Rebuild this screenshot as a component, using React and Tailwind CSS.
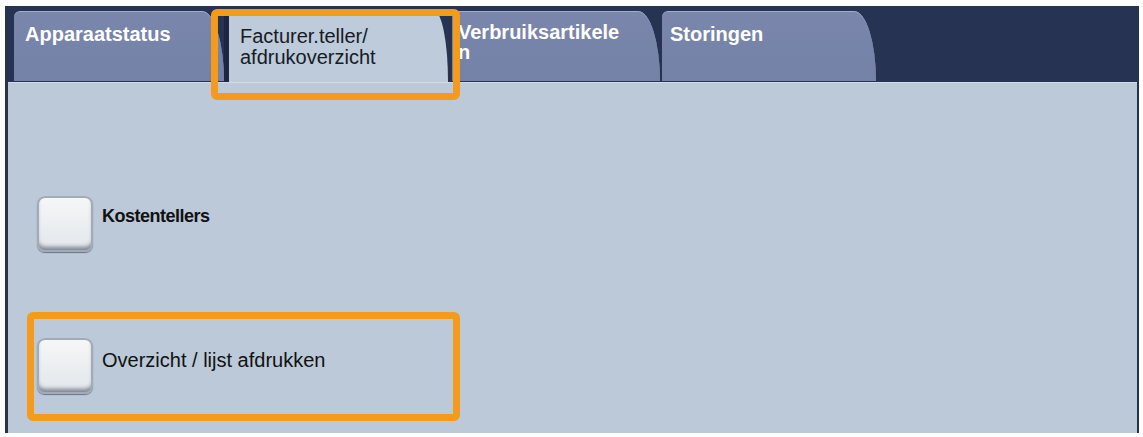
import React from "react";

const font = { fontFamily: '"Liberation Sans", Arial, sans-serif' };

function SquareButton() {
  return (
    <div className="w-[56px] h-[56px] shrink-0 rounded-[8px] bg-gradient-to-b from-[#f6f7f8] to-[#e2e6ea] shadow-[inset_0_0_0_2px_#a3abb7,inset_0_-5px_4px_#7a8494,0_1px_1px_#6b7484]" />
  );
}

export default function App() {
  return (
    <div className="relative w-[1143px] h-[437px] bg-white pt-[6px] pl-[5px] pr-[4px] pb-[4px]" style={font}>
      <div className="flex flex-col h-full border-l-[3px] border-r-[2px] border-[#27324d] bg-[#263353]">
        {/* tab strip */}
        <div className="h-[76px] flex items-start pt-[5px] pl-[6px] shrink-0">
          <div className="w-[210px] h-[70px] rounded-tl-[6px] rounded-tr-[22px_70px] bg-gradient-to-b from-[#7a86ab] to-[#7482a8] border-t border-[#a3adca] pl-[11px] pt-[10px]">
            <span className="text-white font-bold text-[20px] leading-[24px]">Apparaatstatus</span>
          </div>
          <div className="w-[224px] h-[71px] rounded-tl-[4px] rounded-tr-[14px_70px] bg-[#bdcbdb] border-l-[5px] border-[#1d2740] pl-[11px] pt-[15px]">
            <p className="text-[#161b25] text-[20px] leading-[21px]">
              Facturer.teller/
              <br />
              afdrukoverzicht
            </p>
          </div>
          <div className="ml-[4px] w-[208px] h-[70px] rounded-tl-[6px] rounded-tr-[22px_70px] bg-gradient-to-b from-[#7a86ab] to-[#7482a8] border-t border-[#a3adca] pl-[6px] pt-[10px]">
            <p className="text-white font-bold text-[20px] leading-[20px] whitespace-nowrap">
              Verbruiksartikele
              <br />
              n
            </p>
          </div>
          <div className="ml-[2px] w-[214px] h-[70px] rounded-tl-[6px] rounded-tr-[22px_70px] bg-gradient-to-b from-[#7a86ab] to-[#7482a8] border-t border-[#a3adca] pl-[8px] pt-[10px]">
            <span className="text-white font-bold text-[20px] leading-[24px]">Storingen</span>
          </div>
        </div>

        {/* content */}
        <div className="flex-1 bg-[#bbc9d9] border-t border-[#d2dce7] pl-[29px] pt-[113px]">
          <div className="flex items-start gap-[9px]">
            <SquareButton />
            <span className="mt-[8px] text-[#111] font-bold text-[18px] leading-[24px] tracking-[-0.5px]">Kostentellers</span>
          </div>
          <div className="flex items-start gap-[9px] mt-[86px]">
            <SquareButton />
            <span className="mt-[10px] text-[#111] text-[20px] leading-[24px]">Overzicht / lijst afdrukken</span>
          </div>
        </div>
      </div>

      {/* highlight frames */}
      <div className="absolute left-[211px] top-[9px] w-[249px] h-[91px] border-[7px] border-[#f49b1c] rounded-[6px]" />
      <div className="absolute left-[27px] top-[312px] w-[433px] h-[109px] border-[7px] border-[#f49b1c] rounded-[6px]" />
    </div>
  );
}
